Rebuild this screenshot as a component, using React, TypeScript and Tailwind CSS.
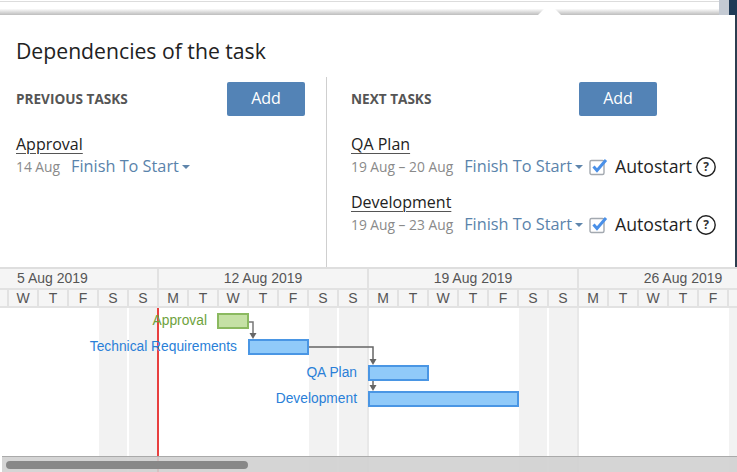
const weeks = [
  { label: '5 Aug 2019', width: 'w-[157px]', pad: 'pr-[52px]', line: '', days: ['', 'W', 'T', 'F', 'S', 'S'] },
  { label: '12 Aug 2019', width: 'w-[210px]', pad: '', line: 'border-l-2', days: ['M', 'T', 'W', 'T', 'F', 'S', 'S'] },
  { label: '19 Aug 2019', width: 'w-[210px]', pad: '', line: 'border-l-2', days: ['M', 'T', 'W', 'T', 'F', 'S', 'S'] },
  { label: '26 Aug 2019', width: 'w-[210px]', pad: '', line: 'border-l-2', days: ['M', 'T', 'W', 'T', 'F', ''] },
]

const week = [
  { w: 'w-[30px]', kind: 'start' }, { w: 'w-[30px]', kind: 'work' }, { w: 'w-[30px]', kind: 'work' }, { w: 'w-[30px]', kind: 'work' }, { w: 'w-[30px]', kind: 'work' },
  { w: 'w-[30px]', kind: 'off' }, { w: 'w-[30px]', kind: 'off' },
]

const days = [
  { w: 'w-[7px]', kind: 'work' },
  { w: 'w-[30px]', kind: 'work' }, { w: 'w-[30px]', kind: 'work' }, { w: 'w-[30px]', kind: 'work' },
  { w: 'w-[30px]', kind: 'off' }, { w: 'w-[30px]', kind: 'off' },
  ...week, ...week, ...week,
]

function HelpIcon() {
  return (
    <svg width="22" height="22" viewBox="0 0 22 22" fill="none" className="ml-[3px] flex-shrink-0">
      <circle cx="11" cy="11" r="9.2" stroke="#1f1f1f" strokeWidth="1.4" />
      <text x="11" y="15" textAnchor="middle" fontSize="12" fontWeight="700" fill="#333" fontFamily="Open Sans">?</text>
    </svg>
  )
}

function CheckIcon() {
  return (
    <svg width="20" height="20" viewBox="0 0 20 20" fill="none" className="flex-shrink-0">
      <rect x="1" y="3.5" width="14" height="14" rx="1.5" stroke="#a3a9b0" strokeWidth="1.4" />
      <path d="M4.5 9.5 L8 13.5 L17 3" stroke="#4a90e8" strokeWidth="3" />
    </svg>
  )
}

function Caret() {
  return <span className="ml-[3px] w-0 h-0 border-x-[4px] border-x-transparent border-t-[4px] border-t-[#5f85ab] mt-[2px]" />
}

function TaskRow({ name, date, autostart }: { name: string; date: string; autostart?: boolean }) {
  return (
    <div>
      <div className="h-[21px] leading-[21px] text-[16px] text-[#222]">
        <span className="underline underline-offset-[3px] decoration-[1px] decoration-[#555]">{name}</span>
      </div>
      <div className="flex items-center h-[24px] -mt-[1px]">
        <span className="text-[13.8px] text-[#8a8a8a] mr-[11px] mt-[2px]">{date}</span>
        <span className="text-[16.3px] text-[#5a83ab]">Finish To Start</span>
        <Caret />
        {autostart && (
          <div className="flex items-center ml-[6px] mt-[1px]">
            <CheckIcon />
            <span className="ml-[6px] text-[17.7px] text-[#1f1f1f]">Autostart</span>
            <HelpIcon />
          </div>
        )}
      </div>
    </div>
  )
}

function AddButton() {
  return (
    <button className="w-[78px] h-[34px] rounded-[2px] bg-[#5383b6] text-white text-[16px] pb-[3px]">Add</button>
  )
}

function GanttBar({ className }: { className: string }) {
  return <div className={`absolute h-[16px] border-2 ${className}`} />
}

function Label({ className, children }: { className: string; children: string }) {
  return <div className={`absolute text-[13.8px] leading-[16px] whitespace-nowrap ${className}`}>{children}</div>
}

export default function App() {
  return (
    <div className="w-[737px] h-[472px] overflow-hidden bg-white flex flex-col" style={{ fontFamily: '"Open Sans", sans-serif' }}>
      {/* Top strip behind the popup */}
      <div className="relative mt-[1px] h-[14px] flex-shrink-0 border-t border-t-[#dcdcdc] bg-gradient-to-b from-white from-50% to-[#bdbdbd]">
        <div className="absolute right-0 top-[-2px] w-[18px] h-[16px] bg-[#c4cad3]" />
        <div className="absolute right-0 top-[-2px] w-[8px] h-[16px] bg-[#1f3a56]" />
        <div className="absolute left-[541px] top-[5px] w-[17px] h-[17px] rotate-45 bg-white" />
      </div>

      {/* Popup */}
      <div className="relative h-[252px] flex-shrink-0 flex flex-col bg-white border-r-2 border-r-[#2c3e50]">
        <div className="h-[62px] pl-[16px] pt-[22px] text-[21.2px] leading-[28px] text-[#222]">Dependencies of the task</div>
        <div className="flex flex-1">
          <div className="w-[327px] border-r border-r-[#cfcfcf] pl-[16px] pr-[21px]">
            <div className="flex items-center justify-between pt-[5px]">
              <span className="text-[13.6px] font-bold text-[#555] uppercase">Previous tasks</span>
              <AddButton />
            </div>
            <div className="mt-[18px]">
              <TaskRow name="Approval" date="14 Aug" />
            </div>
          </div>
          <div className="flex-1 pl-[24px]">
            <div className="flex items-center justify-between pt-[5px] pr-[78px]">
              <span className="text-[13.6px] font-bold text-[#555] uppercase">Next tasks</span>
              <AddButton />
            </div>
            <div className="mt-[18px] flex flex-col gap-[14px]">
              <TaskRow name="QA Plan" date="19 Aug – 20 Aug" autostart />
              <TaskRow name="Development" date="19 Aug – 23 Aug" autostart />
            </div>
          </div>
        </div>
      </div>

      {/* Gantt */}
      <div className="relative flex-1 flex flex-col border-t-2 border-t-[#dedede]" style={{ fontFamily: '"Liberation Sans", sans-serif' }}>
        <div className="flex h-[39px] flex-shrink-0 bg-[#f5f5f5] border-b-2 border-b-[#e2e2e2] text-[#555]">
          {weeks.map(w => (
            <div key={w.label} className={`${w.width} flex-shrink-0 flex flex-col`}>
              <div className={`h-[19px] leading-[19px] text-[14px] text-center border-l-[#e2e2e2] ${w.line} ${w.pad}`}>{w.label}</div>
              <div className="flex flex-1 border-t-2 border-t-[#e2e2e2]">
                {w.days.map((d, i) => (
                  <div
                    key={i}
                    className={`${d === '' && i === 0 ? 'w-[7px]' : 'w-[30px] border-l-2 border-l-[#e2e2e2]'} flex-shrink-0 text-center text-[14px] leading-[17px]`}
                  >
                    {d}
                  </div>
                ))}
              </div>
            </div>
          ))}
        </div>

        <div className="relative flex-1 overflow-hidden flex">
          {days.map((d, i) => (
            <div
              key={i}
              className={`${d.w} flex-shrink-0 ${d.kind === 'off' ? 'bg-[#f2f2f2] border-l-2 border-l-white' : ''} ${d.kind === 'start' ? 'border-l-2 border-l-[#e8e8e8]' : ''}`}
            />
          ))}

          {/* Today line */}
          <div className="absolute left-[157px] top-0 bottom-0 w-[2px] bg-[#e8403f]" />

          {/* Scrollbar */}
          <div className="absolute left-[2px] right-0 bottom-0 h-[16px] bg-[#d0d0d0]/90 border-t border-t-[#aaaaaa] pt-[4px] pl-[4px]">
            <div className="w-[242px] h-[8px] rounded-full bg-[#888888]" />
          </div>

          {/* Task bars and labels */}
          <Label className="right-[530px] top-[5px] text-[#6ea23c]">Approval</Label>
          <GanttBar className="left-[217px] top-[5px] w-[32px] bg-[#c5e1a5] border-[#8bb960]" />
          <Label className="right-[500px] top-[31px] text-[#2a7fd8]">Technical Requirements</Label>
          <GanttBar className="left-[248px] top-[31px] w-[61px] bg-[#90caf9] border-[#4a96e4]" />
          <Label className="right-[380px] top-[57px] text-[#2a7fd8]">QA Plan</Label>
          <GanttBar className="left-[368px] top-[57px] w-[61px] bg-[#90caf9] border-[#4a96e4]" />
          <Label className="right-[380px] top-[83px] text-[#2a7fd8]">Development</Label>
          <GanttBar className="left-[368px] top-[83px] w-[151px] bg-[#90caf9] border-[#4a96e4]" />

          {/* Dependency links */}
          <svg width="737" height="149" className="absolute left-0 top-0 pointer-events-none" fill="none">
            <path d="M249 14 H253 V26" stroke="#777" strokeWidth="1.5" />
            <path d="M249.5 25 H256.5 L253 31 Z" fill="#666" />
            <path d="M309 39 H373 V52" stroke="#666" strokeWidth="1.5" />
            <path d="M369.5 51 H376.5 L373 57 Z" fill="#666" />
            <path d="M373 73 V78" stroke="#666" strokeWidth="1.5" />
            <path d="M369.5 77 H376.5 L373 83 Z" fill="#666" />
          </svg>
        </div>
      </div>
    </div>
  )
}
